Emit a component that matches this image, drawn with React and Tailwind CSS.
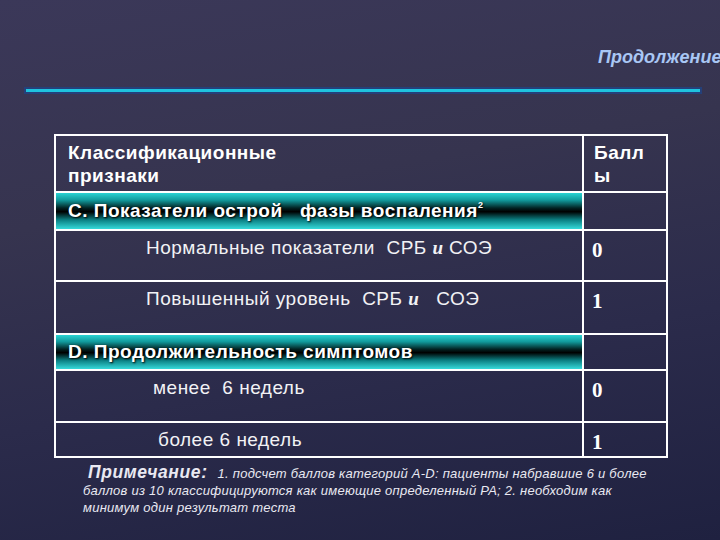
const sectionBg =
  "bg-[linear-gradient(to_bottom,#2ad3d3_0%,#11999b_20%,#022222_42%,#000_52%,#0a7d80_74%,#36dada_100%)]"

const Row = ({ label, score, h, pl }) => (
  <tr className={h}>
    <td className={`border-2 border-white align-top pt-[6px] ${pl} text-[19px] leading-[22px] tracking-[0.5px] text-[#f2f2f5] whitespace-pre`}>{label}</td>
    <td className="border-2 border-white align-top pt-[7px] pl-[8px] font-['Liberation_Serif',serif] font-bold text-[21px] leading-[24px] text-white">{score}</td>
  </tr>
)

const Sign = () => <span className="font-['Liberation_Serif',serif] italic font-bold tracking-normal">и</span>

export default function App() {
  return (
    <div className="w-[720px] h-[540px] overflow-hidden bg-[linear-gradient(170deg,#3b3859_0%,#36344f_35%,#2b2b4b_65%,#1f2140_100%)] font-['Liberation_Sans',Arial,sans-serif]">
      <div className="pt-[46px] pl-[598px] whitespace-nowrap leading-[22px]">
        <span className="italic font-bold text-[18px] text-[#a9c7f4]">Продолжение</span>
      </div>
      <div className="mt-[20px] ml-[26px] w-[674px] h-[3px] bg-[#1fc3de] shadow-[0_0_0_2px_#24407a]"></div>

      <table className="mt-[42px] ml-[54px] w-[612px] border-collapse border-2 border-white table-fixed">
        <colgroup>
          <col className="w-[528px]" />
          <col className="w-[84px]" />
        </colgroup>
        <tbody>
          <tr className="h-[57px]">
            <td className="border-2 border-white align-top pt-[5px] pl-[12px] font-bold text-[19px] leading-[23px] tracking-[0.5px] text-white">
              Классификационные<br />признаки
            </td>
            <td className="border-2 border-white align-top pt-[5px] pl-[10px] font-bold text-[19px] leading-[23px] tracking-[0.5px] text-white">
              Балл<br />ы
            </td>
          </tr>
          <tr className="h-[38px]">
            <td className="border-2 border-white p-0 h-[38px]">
              <div className={`h-[36px] flex items-center px-[12px] ${sectionBg} text-white font-bold text-[19px] tracking-[0.5px] [text-shadow:1px_1px_2px_#000] whitespace-pre`}>
                C. Показатели острой   фазы воспаления<sup className="text-[9px] -top-[0.7em]">2</sup>
              </div>
            </td>
            <td className="border-2 border-white"></td>
          </tr>
          <Row h="h-[51px]" pl="pl-[90px]" label={<>Нормальные показатели  СРБ <Sign /> СОЭ</>} score="0" />
          <Row h="h-[53px]" pl="pl-[90px]" label={<>Повышенный уровень  СРБ <Sign />   СОЭ</>} score="1" />
          <tr className="h-[36px]">
            <td className="border-2 border-white p-0 h-[36px]">
              <div className={`h-[34px] flex items-center px-[12px] ${sectionBg} text-white font-bold text-[19px] tracking-[0.5px] [text-shadow:1px_1px_2px_#000]`}>
                D. Продолжительность симптомов
              </div>
            </td>
            <td className="border-2 border-white"></td>
          </tr>
          <Row h="h-[52px]" pl="pl-[97px]" label="менее  6 недель" score="0" />
          <Row h="h-[35px]" pl="pl-[102px]" label="более 6 недель" score="1" />
        </tbody>
      </table>

      <div className="mt-[6px] pl-[83px] italic text-[13px] leading-[17px] text-[#e9e9f2] tracking-[0.25px] whitespace-nowrap">
        <div>
          <span className="pl-[5px] font-bold text-[17.5px] tracking-[0.6px]">Примечание:</span>
          <span className="pl-[10px]">1. подсчет баллов категорий А-D: пациенты набравшие 6 и более</span>
        </div>
        <div>баллов из 10 классифицируются как имеющие определенный РА; 2. необходим как</div>
        <div>минимум один результат теста</div>
      </div>
    </div>
  )
}
